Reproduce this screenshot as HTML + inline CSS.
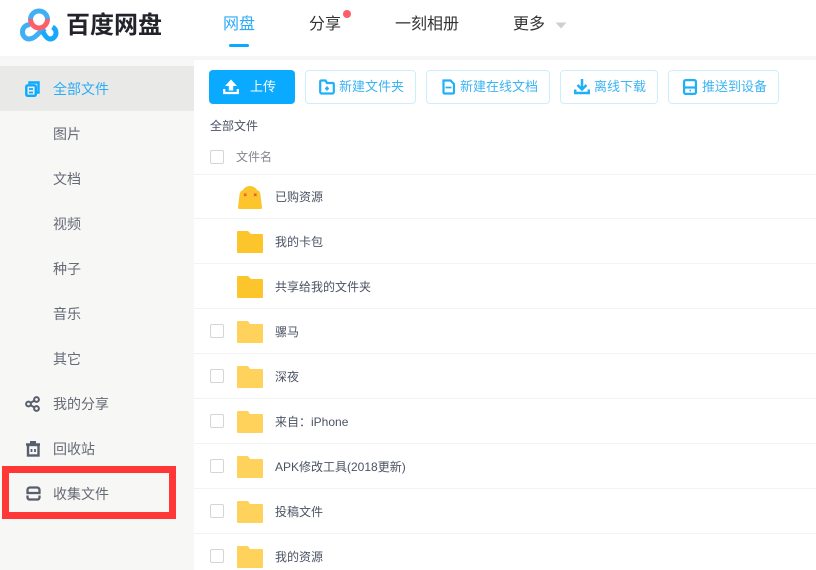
<!DOCTYPE html>
<html><head><meta charset="utf-8">
<style>
html,body{margin:0;padding:0;background:#fff}
#p{position:relative;width:816px;height:570px;overflow:hidden;background:#fff;font-family:"Liberation Sans","Noto Sans CJK SC",sans-serif;color:#424e67}
#p div,#p svg{position:absolute}
.t{white-space:nowrap;line-height:20px}
.nav{font-size:16px;top:15px;color:#333}
.side{font-size:14px;left:53px;color:#666a75}
.btn{top:70px;height:34px;border:1px solid #cdeffb;border-radius:4px;box-sizing:border-box;background:#fff}
.bt{top:77px;font-size:13px;color:#3db4f2}
.ln{left:194px;width:622px;height:1px;background:#f3f3f3}
.cb{left:210px;width:14px;height:14px;border:1px solid #d5d5d8;border-radius:2px;box-sizing:border-box;background:#fff}
.fn{left:275px;font-size:12px;color:#4b5363}
</style></head><body>
<div id="p">
<div style="left:0;top:56px;width:816px;height:4px;background:#f6f6f6"></div>

<svg style="left:18px;top:6px" width="44" height="38" viewBox="18 6 44 38" fill="none">
<path d="M30 24.500C25 25 22.500 28 22.500 32C22.500 36.500 26 39 29 39C33 39 36 36 39 33L45 28.500" stroke="#3fb0f5" stroke-width="5"/>
<path d="M42.500 31C45 36 47.500 39 50 39C53.500 39 56 36 56 33C56 30.500 55 28.500 52.500 27" stroke="#18a8fc" stroke-width="5"/>
<path d="M30.500 19.500C30.500 14.500 34.500 11 39 11S47.500 14.500 47.500 19.500" stroke="#3fb0f5" stroke-width="5"/>
<path d="M30.500 19C30.500 24 34.500 28 39 28S47.500 24 47.500 19" stroke="#fc5f69" stroke-width="5"/>
</svg>
<div class="t" style="left:66px;top:12px;font-size:24px;line-height:28px;font-weight:700;color:#23232b">百度网盘</div>

<div class="t nav" style="left:223px;color:#2cabf7">网盘</div>
<div style="left:229px;top:44px;width:20px;height:3px;border-radius:2px;background:#09aaff"></div>
<div class="t nav" style="left:309px">分享</div>
<div style="left:343px;top:10px;width:8px;height:8px;border-radius:50%;background:#fc5f69"></div>
<div class="t nav" style="left:395px">一刻相册</div>
<div class="t nav" style="left:513px">更多</div>
<svg style="left:555px;top:22px" width="12" height="7"><path d="M0.500 0.500h11L6 6.500z" fill="#cfcfd3"/></svg>

<div style="left:0;top:60px;width:194px;height:510px;background:#f7f7f6"></div>
<div style="left:0;top:66px;width:194px;height:45px;background:#e9e9e8"></div>

<svg style="left:25px;top:81px" width="15" height="16" fill="none" stroke="#09aaff" stroke-width="2.400"><path d="M4.500 3V1.500h9V11.500H11.500"/><rect x="1.300" y="4.300" width="9.500" height="10.500" rx="1.500"/><path d="M4 8h4M4 11.500h4" stroke-width="1.700"/></svg>
<div class="t side" style="top:79px;color:#2cabf7">全部文件</div>
<div class="t side" style="top:124px">图片</div>
<div class="t side" style="top:169px">文档</div>
<div class="t side" style="top:214px">视频</div>
<div class="t side" style="top:259px">种子</div>
<div class="t side" style="top:304px">音乐</div>
<div class="t side" style="top:349px">其它</div>
<svg style="left:25px;top:396px" width="15" height="16" fill="none" stroke="#585e6e" stroke-width="2"><circle cx="3.500" cy="8" r="2.400"/><circle cx="11.500" cy="3.500" r="2.400"/><circle cx="11.500" cy="12.500" r="2.400"/><path d="M5.600 6.800l3.800-2.200M5.600 9.200l3.800 2.200"/></svg>
<div class="t side" style="top:394px">我的分享</div>
<svg style="left:26px;top:441px" width="14" height="16" fill="none" stroke="#585e6e" stroke-width="2.400"><path d="M0 3.500h14M4 1.200h6"/><rect x="2" y="4" width="10.500" height="10.500"/><path d="M5.500 8v3M9 8v3" stroke-width="1.800"/></svg>
<div class="t side" style="top:439px">回收站</div>
<svg style="left:26px;top:486px" width="15" height="15" fill="none" stroke="#585e6e" stroke-width="2.300"><path d="M1.500 7.500V4a2.500 2.500 0 0 1 2.500-2.500h7A2.500 2.500 0 0 1 13.500 4v3.500"/><path d="M0.500 7h14"/><path d="M1.500 9.500v2a2 2 0 0 0 2 2h8a2 2 0 0 0 2-2v-2"/></svg>
<div class="t side" style="top:484px">收集文件</div>
<div style="left:2px;top:466px;width:174px;height:53px;border:7px solid #ff3737;box-sizing:border-box"></div>

<div style="left:209px;top:70px;width:86px;height:34px;background:#09aaff;border-radius:4px"></div>
<svg style="left:223px;top:79px" width="16" height="16" fill="#fff"><path d="M8 0.500L14 7H10.200V11.500H5.800V7H2z"/><path d="M1.200 10v4h13.600v-4" fill="none" stroke="#fff" stroke-width="2.200"/></svg>
<div class="t" style="left:250px;top:77px;font-size:13px;color:#fff">上传</div>

<div class="btn" style="left:305px;width:111px"></div>
<svg style="left:319px;top:79px" width="16" height="16" fill="none" stroke="#1fb0fa" stroke-width="2.200"><path d="M1.200 13V2.500a1 1 0 0 1 1-1h4.300l1.500 2.500h5.800a1 1 0 0 1 1 1V13a1.500 1.500 0 0 1-1.500 1.500H2.700A1.500 1.500 0 0 1 1.200 13z"/><path d="M8 7.500v4M6 9.500h4" stroke-width="1.800"/></svg>
<div class="t bt" style="left:339px">新建文件夹</div>

<div class="btn" style="left:426px;width:124px"></div>
<svg style="left:442px;top:79px" width="13" height="16" fill="none" stroke="#1fb0fa" stroke-width="2.200"><path d="M1.500 1.500h7l3.500 3.500v8.500a1 1 0 0 1-1 1H2.500a1 1 0 0 1-1-1z"/><path d="M3.500 8.500h6" stroke-width="1.700"/></svg>
<div class="t bt" style="left:460px">新建在线文档</div>

<div class="btn" style="left:560px;width:98px"></div>
<svg style="left:574px;top:78px" width="16" height="17" fill="none" stroke="#1fb0fa" stroke-width="2.500"><path d="M8 1v10M3.500 7L8 11.500 12.500 7"/><path d="M1.200 11.500v3.500h13.600v-3.500"/></svg>
<div class="t bt" style="left:594px">离线下载</div>

<div class="btn" style="left:668px;width:111px"></div>
<svg style="left:683px;top:79px" width="14" height="16" fill="none" stroke="#1fb0fa" stroke-width="2.200"><rect x="1.100" y="1.100" width="11.800" height="13.800" rx="1.500"/><path d="M1 8.500h12"/><path d="M6.500 11.500h1.500" stroke-width="1.700"/></svg>
<div class="t bt" style="left:702px">推送到设备</div>

<div class="t" style="left:210px;top:116px;font-size:12px;color:#4b5363">全部文件</div>
<div class="cb" style="top:150px"></div>
<div class="t" style="left:236px;top:147px;font-size:12px;color:#85878f">文件名</div>

<div class="ln" style="top:174px"></div>
<div class="ln" style="top:218px"></div>
<div class="ln" style="top:263px"></div>
<div class="ln" style="top:308px"></div>
<div class="ln" style="top:353px"></div>
<div class="ln" style="top:398px"></div>
<div class="ln" style="top:443px"></div>
<div class="ln" style="top:488px"></div>
<div class="ln" style="top:533px"></div>

<svg style="left:238px;top:186px" width="24" height="23"><path d="M5 4C6.500 1.500 9 0 12 0S17.500 1.500 19 4L21 5Q22 6 22.500 9L24 21.500Q24 23 23 23H1Q0 23 0 21.500L1.500 9Q2 6 3 5z" fill="#fdc52c"/><path d="M6 7.500l2.500 2.500M8.500 7.500L6 10M16 7.500l2.500 2.500M18.500 7.500L16 10" stroke="#ea4d3a" stroke-width="1"/></svg>
<div class="t fn" style="top:187px">已购资源</div>

<svg style="left:237px;top:231px" width="26" height="22"><path d="M0 1a1 1 0 0 1 1-1h10l3 3h11a1 1 0 0 1 1 1v17a1 1 0 0 1-1 1H1a1 1 0 0 1-1-1z" fill="#fdc52c"/></svg>
<div class="t fn" style="top:232px">我的卡包</div>

<svg style="left:237px;top:276px" width="26" height="22"><path d="M0 1a1 1 0 0 1 1-1h10l3 3h11a1 1 0 0 1 1 1v17a1 1 0 0 1-1 1H1a1 1 0 0 1-1-1z" fill="#fdc52c"/></svg>
<div class="t fn" style="top:277px">共享给我的文件夹</div>

<div class="cb" style="top:324px"></div>
<svg style="left:237px;top:321px" width="26" height="22"><path d="M0 1a1 1 0 0 1 1-1h10l2 3h12a1 1 0 0 1 1 1v17a1 1 0 0 1-1 1H1a1 1 0 0 1-1-1z" fill="#ffd25c"/></svg>
<div class="t fn" style="top:322px">骡马</div>

<div class="cb" style="top:369px"></div>
<svg style="left:237px;top:366px" width="26" height="22"><path d="M0 1a1 1 0 0 1 1-1h10l2 3h12a1 1 0 0 1 1 1v17a1 1 0 0 1-1 1H1a1 1 0 0 1-1-1z" fill="#ffd25c"/></svg>
<div class="t fn" style="top:367px">深夜</div>

<div class="cb" style="top:414px"></div>
<svg style="left:237px;top:411px" width="26" height="22"><path d="M0 1a1 1 0 0 1 1-1h10l2 3h12a1 1 0 0 1 1 1v17a1 1 0 0 1-1 1H1a1 1 0 0 1-1-1z" fill="#ffd25c"/></svg>
<div class="t fn" style="top:412px">来自：iPhone</div>

<div class="cb" style="top:459px"></div>
<svg style="left:237px;top:456px" width="26" height="22"><path d="M0 1a1 1 0 0 1 1-1h10l2 3h12a1 1 0 0 1 1 1v17a1 1 0 0 1-1 1H1a1 1 0 0 1-1-1z" fill="#ffd25c"/></svg>
<div class="t fn" style="top:457px">APK修改工具(2018更新)</div>

<div class="cb" style="top:504px"></div>
<svg style="left:237px;top:501px" width="26" height="22"><path d="M0 1a1 1 0 0 1 1-1h10l2 3h12a1 1 0 0 1 1 1v17a1 1 0 0 1-1 1H1a1 1 0 0 1-1-1z" fill="#ffd25c"/></svg>
<div class="t fn" style="top:502px">投稿文件</div>

<div class="cb" style="top:549px"></div>
<svg style="left:237px;top:546px" width="26" height="22"><path d="M0 1a1 1 0 0 1 1-1h10l2 3h12a1 1 0 0 1 1 1v17a1 1 0 0 1-1 1H1a1 1 0 0 1-1-1z" fill="#ffd25c"/></svg>
<div class="t fn" style="top:547px">我的资源</div>
</div>
</body></html>
